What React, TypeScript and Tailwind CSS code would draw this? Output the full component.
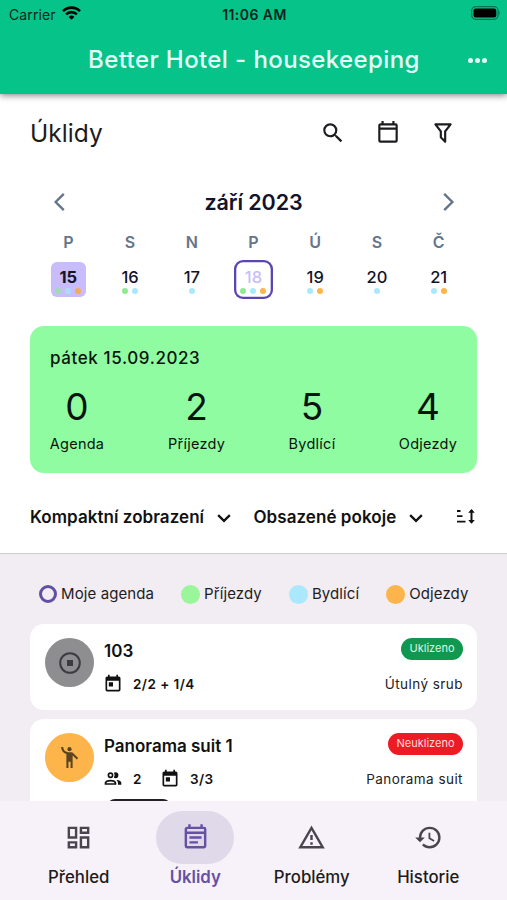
import { clsx } from "clsx";
import { MdEmojiPeople, MdSearch } from "react-icons/md";

interface Day {
  name: string;
  date: number;
  dots: string[];
  state?: 'selected' | 'today';
}

const GREEN = 'bg-[#9af59b]';
const BLUE = 'bg-[#abe7fd]';
const ORANGE = 'bg-[#fdb44b]';

const DAYS: Day[] = [
  { name: 'P', date: 15, dots: ['bg-[#a0dcb0]', 'bg-[#abdcfd]', 'bg-[#f3ac5c]'], state: 'selected' },
  { name: 'S', date: 16, dots: ['bg-[#90ea91]', BLUE] },
  { name: 'N', date: 17, dots: [BLUE] },
  { name: 'P', date: 18, dots: ['bg-[#90ea91]', BLUE, ORANGE], state: 'today' },
  { name: 'Ú', date: 19, dots: [BLUE, ORANGE] },
  { name: 'S', date: 20, dots: [BLUE] },
  { name: 'Č', date: 21, dots: [BLUE, ORANGE] },
];

const STATS = [
  { value: 0, label: 'Agenda', width: 'w-[54px]' },
  { value: 2, label: 'Příjezdy', width: 'w-[57px]' },
  { value: 5, label: 'Bydlící', width: 'w-[46px]' },
  { value: 4, label: 'Odjezdy', width: 'w-[58px]' },
];

const PATHS = {
  calendar: 'M19 3h-1V1h-2v2H8V1H6v2H5c-1.11 0-2 .9-2 2v14a2 2 0 002 2h14a2 2 0 002-2V5a2 2 0 00-2-2m0 16H5V9h14v10m0-12H5V5h14v2z',
  filter: 'M15 19.88c.04.3-.06.62-.29.83a.996.996 0 01-1.41 0L9.29 16.7a.989.989 0 01-.29-.83v-5.12L4.21 4.62a1 1 0 01.17-1.4c.19-.14.4-.22.62-.22h14c.22 0 .43.08.62.22a1 1 0 01.17 1.4L15 10.75v9.13M7.04 5L11 10.06v5.52l2 2v-7.53L16.96 5H7.04z',
  today: 'M7 10h5v5H7m12 4H5V8h14m0-5h-1V1h-2v2H8V1H6v2H5c-1.11 0-2 .9-2 2v14a2 2 0 002 2h14a2 2 0 002-2V5a2 2 0 00-2-2z',
  people: 'M13.07 10.41A5 5 0 0 0 13.07 4.59A3.39 3.39 0 0 1 15 4A3.5 3.5 0 0 1 15 11A3.39 3.39 0 0 1 13.07 10.41M5.5 7.5A3.5 3.5 0 1 1 9 11A3.5 3.5 0 0 1 5.5 7.5M7.5 7.5A1.5 1.5 0 1 0 9 6A1.5 1.5 0 0 0 7.5 7.5M16 17V19H2V17S2 13 9 13 16 17 16 17M14 17C13.86 16.22 12.67 15 9 15S4.07 16.31 4 17M15.95 13A5.32 5.32 0 0 1 18 17V19H22V17S22 13.37 15.94 13Z',
  dashboard: 'M19 5v2h-4V5h4M9 5v6H5V5h4m10 8v6h-4v-6h4M9 17v2H5v-2h4M21 3h-8v6h8V3M11 3H3v10h8V3m10 8h-8v10h8V11m-10 4H3v6h8v-6z',
  note: 'M19 3h-1V1h-2v2H8V1H6v2H5c-1.11 0-2 .9-2 2v14a2 2 0 002 2h14a2 2 0 002-2V5a2 2 0 00-2-2m0 16H5V9h14v10m0-12H5V5h14v2m-2 4H7v2h10v-2m-3 4H7v2h7v-2z',
  alert: 'M12 2L1 21h22M12 6l7.53 13H4.47M11 10v4h2v-4m-2 6v2h2v-2',
  history: 'M13.5 8H12v5l4.28 2.54.72-1.21-3.5-2.08V8M13 3a9 9 0 00-9 9H1l3.96 4.03L9 12H6a7 7 0 017-7 7 7 0 017 7 7 7 0 01-7 7c-1.93 0-3.68-.79-4.94-2.06l-1.42 1.42A8.896 8.896 0 0013 21a9 9 0 009-9 9 9 0 00-9-9',
};

function Icon({ name, className }: { name: keyof typeof PATHS; className?: string }) {
  return (
    <svg viewBox="0 0 24 24" fill="currentColor" className={clsx('shrink-0', className)}>
      <path d={PATHS[name]} />
    </svg>
  );
}

function Chevron({ d, className }: { d: string; className?: string }) {
  return (
    <svg viewBox="0 0 24 24" fill="none" stroke="currentColor" className={clsx('shrink-0', className)}>
      <path d={d} />
    </svg>
  );
}

function Header() {
  return (
    <header className="relative z-10 h-[94px] shrink-0 bg-[#06c389] shadow-[0_1px_7px_rgba(0,0,0,0.55)]">
      <div className="grid h-7 grid-cols-3 items-center pl-[9px] pr-[6px] text-[#06251b]">
        <div className="flex items-center gap-1.5">
          <span className="text-[14px] tracking-[0.1px]">Carrier</span>
          <svg className="mb-0.5 h-[14px] w-[19px]" viewBox="0 0 19 14" fill="none" stroke="#000" strokeWidth="2.6">
            <path d="M1 5.2a12 12 0 0 1 17 0" />
            <path d="M4.1 8.4a7.6 7.6 0 0 1 10.8 0" />
            <path d="M9.5 13.8L6.6 10.9a4.1 4.1 0 0 1 5.8 0z" fill="#000" stroke="none" />
          </svg>
        </div>
        <span className="pr-px text-center text-[14px] font-semibold tracking-[0.45px]">11:06 AM</span>
        <svg className="mb-0.5 h-[14px] w-[30px] justify-self-end" viewBox="0 0 30 14">
          <rect x="0.7" y="0.7" width="26.4" height="12.6" rx="4" fill="none" stroke="#06734f" strokeWidth="1.2" />
          <rect x="2.5" y="2.5" width="22.8" height="9" rx="2.2" fill="#000" />
          <path d="M28.2 4.8q1.6 2.2 0 4.4z" fill="#06734f" />
        </svg>
      </div>
      <div className="flex h-16 items-center pl-[88px] pr-[20px] text-[#e4fff6]">
        <h1 className="whitespace-nowrap text-[24px] font-medium tracking-[0.4px]">Better Hotel - housekeeping</h1>
        <div className="ml-auto flex gap-[2px]">
          <span className="size-[5px] rounded-full bg-[#e4fff6]" />
          <span className="size-[5px] rounded-full bg-[#e4fff6]" />
          <span className="size-[5px] rounded-full bg-[#e4fff6]" />
        </div>
      </div>
    </header>
  );
}

function Calendar() {
  return (
    <div className="px-[37.5px]">
      <div className="flex h-[34px] items-center justify-between px-[9px] text-[#64748b]">
        <Chevron d="M15.5 4.5L8 12l7.5 7.5" className="size-[26px] stroke-[2.2]" />
        <span className="text-[21.5px] font-semibold tracking-[-0.1px] text-[#13132b]">září 2023</span>
        <Chevron d="M8.5 4.5L16 12l-7.5 7.5" className="size-[26px] stroke-[2.2]" />
      </div>
      <div className="mt-[13px] grid grid-cols-7">
        {DAYS.map((day) => (
          <div key={day.date} className="flex flex-col items-center">
            <span className="text-[16px] leading-5 font-semibold text-[#64748b]">{day.name}</span>
            <div
              className={clsx(
                'mt-2 flex h-[39px] w-[39px] flex-col items-center rounded-[9px] text-[16.5px] leading-5',
                day.state === 'selected' && 'font-bold text-[#13132b]',
                day.state === 'today' && 'font-medium text-[#c9bcfa] shadow-[inset_0_0_0_2.3px_#5b45b0]',
                !day.state && 'font-medium text-[#13132b]',
              )}
            >
              <div
                className={clsx(
                  'mt-0.5 flex h-[35px] w-[35px] flex-col items-center rounded-md pt-[5px]',
                  day.state === 'selected' && 'bg-[#c9bcfa]',
                )}
              >
                <span>{day.date}</span>
                <div className="mt-px flex gap-[4px]">
                  {day.dots.map((color) => (
                    <span key={color} className={clsx('size-[6px] rounded-full', color)} />
                  ))}
                </div>
              </div>
            </div>
          </div>
        ))}
      </div>
    </div>
  );
}

function Summary() {
  return (
    <section className="mx-[30px] mt-[27px] h-[147px] rounded-[14px] bg-[#90fca2] px-5 pt-[21px] text-[#0b140c]">
      <h3 className="text-[17px] leading-[22px] font-medium tracking-[0.6px]">pátek 15.09.2023</h3>
      <div className="flex justify-between">
        {STATS.map((stat) => (
          <div key={stat.label} className={clsx('flex flex-col items-center', stat.width)}>
            <span className="mt-[16px] text-[37px] leading-[44px]">{stat.value}</span>
            <span className="mt-[5px] whitespace-nowrap text-[14.5px] leading-5 tracking-[0.25px]">{stat.label}</span>
          </div>
        ))}
      </div>
    </section>
  );
}

function FilterBar() {
  return (
    <div className="mt-[24px] flex h-[57px] shrink-0 items-start border-b border-[#cfccd1] pl-[30px] pr-[31px] text-[17px] font-semibold leading-[41px] tracking-[0.05px] text-[#111]">
      <div className="flex w-[223.5px] items-center gap-[10px] whitespace-nowrap">
        Kompaktní zobrazení
        <Chevron d="M5 8.5l7 7 7-7" className="size-5 stroke-[2.7]" />
      </div>
      <div className="flex items-center gap-[10px] whitespace-nowrap">
        Obsazené pokoje
        <Chevron d="M5 8.5l7 7 7-7" className="size-5 stroke-[2.7]" />
      </div>
      <svg className="ml-auto mt-[11px] h-[17px] w-[20px]" viewBox="0 0 20 17" fill="none" stroke="currentColor">
        <path d="M1 3h3.5M1 8.2h5.5M1 13.6h8.5" strokeWidth="1.8" />
        <path d="M15.5 2v12.5" strokeWidth="2" />
        <path d="M12.2 4.7L15.5 1l3.3 3.7zM12.2 12l3.3 3.7 3.3-3.7z" fill="currentColor" stroke="none" />
      </svg>
    </div>
  );
}

function Legend() {
  return (
    <div className="flex h-[70px] shrink-0 items-center justify-between pl-[39px] pr-[38.5px] pt-[10px] text-[15px] tracking-[0.1px] text-[#1e1c22]">
      <div className="flex items-center gap-1">
        <span className="size-[18px] rounded-full border-[3.5px] border-[#5f50a4]" />
        Moje agenda
      </div>
      <div className="flex items-center gap-1">
        <span className={clsx('size-[19px] rounded-full', GREEN)} />
        Příjezdy
      </div>
      <div className="flex items-center gap-1">
        <span className={clsx('size-[19px] rounded-full', BLUE)} />
        Bydlící
      </div>
      <div className="flex items-center gap-1">
        <span className={clsx('size-[19px] rounded-full', ORANGE)} />
        Odjezdy
      </div>
    </div>
  );
}

interface RoomProps {
  name: string;
  type: string;
  beds: string;
  guests?: number;
  clean?: boolean;
}

function Room({ name, type, beds, guests, clean }: RoomProps) {
  return (
    <article
      className={clsx(
        'mb-[9.5px] flex shrink-0 rounded-[14px] bg-white pl-[15px] pr-[14px] pt-[14px] text-[#111]',
        guests ? 'h-[120px]' : 'h-[85.5px]',
      )}
    >
      <div
        className={clsx(
          'flex size-[49px] shrink-0 items-center justify-center rounded-full',
          clean ? 'bg-[#8e8d8f]' : 'bg-[#fdb44b]',
        )}
      >
        {clean ? (
          <svg viewBox="0 0 24 24" className="size-[24px]" fill="none" stroke="#3d3b40">
            <circle cx="12" cy="12" r="9.8" strokeWidth="2" />
            <rect x="9" y="9" width="6" height="6" fill="#3d3b40" stroke="none" />
          </svg>
        ) : (
          <MdEmojiPeople className="size-[25px] text-[#5c4420]" />
        )}
      </div>
      <div className="ml-[10px] flex flex-col">
        <h4 className="pt-px text-[17px] leading-[25px] font-semibold">{name}</h4>
        <div className="mt-[10px] flex items-center text-[13.5px] font-semibold leading-5 tracking-[0.45px]">
          {guests && (
            <>
              <Icon name="people" className="-ml-px size-[20px]" />
              <span className="ml-[10px] mr-[18px]">{guests}</span>
            </>
          )}
          <Icon name="today" className={clsx('size-[20px]', !guests && '-ml-px')} />
          <span className="ml-[10px]">{beds}</span>
        </div>
      </div>
      <div className="ml-auto flex flex-col items-end">
        <span
          className={clsx(
            'h-[22px] rounded-full px-[8.5px] text-[11px] leading-[21px]',
            clean ? 'bg-[#129750] text-[#d9f7e5]' : 'bg-[#ed1c24] text-[#ffdfe0]',
          )}
        >
          {clean ? 'Uklizeno' : 'Neuklizeno'}
        </span>
        <span className="mt-[14px] text-[13.5px] leading-5 tracking-[0.45px] text-[#222]">{type}</span>
      </div>
    </article>
  );
}

const NAV: { icon: keyof typeof PATHS; label: string; active?: boolean }[] = [
  { icon: 'dashboard', label: 'Přehled' },
  { icon: 'note', label: 'Úklidy', active: true },
  { icon: 'alert', label: 'Problémy' },
  { icon: 'history', label: 'Historie' },
];

function BottomNav() {
  return (
    <nav className="grid h-[99px] shrink-0 grid-cols-4 bg-[#f7f2f9] px-[20.5px] pt-[10px]">
      {NAV.map((item) => (
        <div key={item.label} className="flex flex-col items-center">
          <div
            className={clsx(
              'flex h-[53px] w-[78px] items-center justify-center rounded-full',
              item.active ? 'bg-[#e0d9e9] text-[#6550a4]' : 'text-[#49454f]',
            )}
          >
            <Icon name={item.icon} className="size-[29px]" />
          </div>
          <span
            className={clsx(
              'mt-px text-[16.8px] leading-6',
              item.active ? 'font-semibold text-[#6550a4]' : 'font-medium text-[#1d1b20]',
            )}
          >
            {item.label}
          </span>
        </div>
      ))}
    </nav>
  );
}

export default function App() {
  return (
    <div className="flex h-[900px] w-[507px] flex-col overflow-hidden bg-white font-['Inter',sans-serif]">
      <Header />

      {/* Page title and actions */}
      <div className="flex h-[78px] shrink-0 items-center pl-[30px] pr-[51px] text-[#1c1b1f]">
        <h2 className="pt-px text-[24.5px] tracking-[0.05px]">Úklidy</h2>
        <div className="ml-auto flex items-center gap-[29px]">
          <MdSearch className="size-[26px]" />
          <Icon name="calendar" className="size-[26px]" />
          <Icon name="filter" className="size-[26px]" />
        </div>
      </div>

      <div className="mt-[13px]">
        <Calendar />
      </div>
      <Summary />
      <FilterBar />

      {/* Room list */}
      <main className="flex min-h-0 flex-1 flex-col overflow-hidden bg-[#f2edf2]">
        <Legend />
        <div className="flex flex-col px-[30px]">
          <Room name="103" type="Útulný srub" beds="2/2 + 1/4" clean />
          <div className="relative">
            <Room name="Panorama suit 1" type="Panorama suit" beds="3/3" guests={2} />
            <div className="absolute left-[77px] top-[80px] h-5 w-[64px] rounded-lg bg-[#222126]" />
          </div>
        </div>
      </main>

      <BottomNav />
    </div>
  );
}
